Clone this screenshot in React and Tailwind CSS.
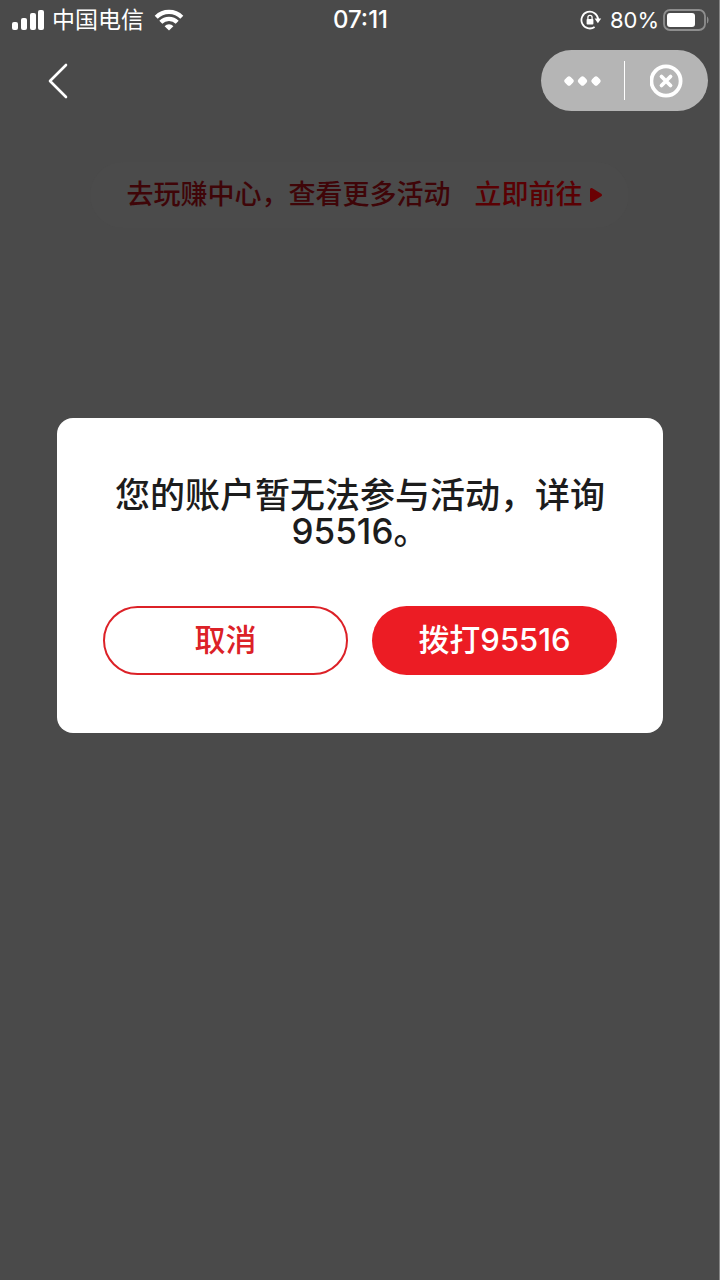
import React from 'react';

const SignalIcon = () => (
  <svg width="34" height="22" viewBox="0 0 34 22" fill="white" aria-hidden="true">
    <rect x="0" y="13" width="6" height="8" rx="2" />
    <rect x="9" y="9" width="6" height="12" rx="2" />
    <rect x="18" y="4" width="6" height="17" rx="2" />
    <rect x="26" y="1" width="6" height="20" rx="2" />
  </svg>
);

const WifiIcon = () => (
  <svg width="30" height="22" viewBox="0 0 30 22" aria-hidden="true">
    <g fill="none" stroke="white" strokeWidth="4.2">
      <path d="M2.2 8.2a18 18 0 0 1 25.6 0" />
      <path d="M6.8 13.2a11.6 11.6 0 0 1 16.4 0" />
    </g>
    <path d="M15 21.6l-4.4-4.4a6.2 6.2 0 0 1 8.8 0z" fill="white" />
  </svg>
);

const RotationLockIcon = () => (
  <svg width="22" height="20" viewBox="0 0 22 20" fill="none" aria-hidden="true">
    <path d="M14.6 17A8.4 8.4 0 1 1 18.2 9.2" stroke="white" strokeWidth="1.8" />
    <path d="M14.6 8.6h6.6l-3.3 4.6z" fill="white" />
    <rect x="6.6" y="9" width="6.8" height="5.6" rx="0.8" fill="white" />
    <path d="M7.9 9.4V7.4a2.1 2.1 0 0 1 4.2 0v2" stroke="white" strokeWidth="1.3" />
  </svg>
);

const BatteryIcon = () => (
  <svg width="46" height="22" viewBox="0 0 46 22" aria-hidden="true">
    <rect x="1" y="1" width="41" height="20" rx="6" fill="none" stroke="#8e8e8e" strokeWidth="1.8" />
    <rect x="4" y="4" width="28" height="14" rx="3" fill="white" />
    <path d="M44 7.5c2 1 2 6 0 7z" fill="#8e8e8e" />
  </svg>
);

const StatusBar = () => (
  <div className="grid grid-cols-[1fr_auto_1fr] items-center h-10 pl-3 pr-2.5 text-white">
    <div className="flex items-center">
      <SignalIcon />
      <span className="ml-1.5 mr-2.5 text-[23px] leading-8">中国电信</span>
      <WifiIcon />
    </div>
    <span className="text-[24px] leading-8 font-medium">07:11</span>
    <div className="flex items-center justify-end">
      <RotationLockIcon />
      <span className="ml-2 mr-1 text-[22px] leading-8">80%</span>
      <BatteryIcon />
    </div>
  </div>
);

const NavBar = () => (
  <div className="flex items-center justify-between mt-2.5 pl-12 pr-[11px]">
    <button type="button" aria-label="返回">
      <svg width="20" height="36" viewBox="0 0 20 36" fill="none" aria-hidden="true">
        <path d="M18 2L2 18l16 16" stroke="white" strokeWidth="2.6" strokeLinecap="round" strokeLinejoin="round" />
      </svg>
    </button>
    <div className="flex items-center w-[167px] h-[61px] rounded-full bg-[#b5b5b5]">
      <button type="button" aria-label="更多" className="flex-1 flex justify-center">
        <svg width="38" height="12" viewBox="0 0 38 12" fill="white" aria-hidden="true">
          <rect x="1" y="2" width="8" height="8" rx="2.4" transform="rotate(45 5 6)" />
          <rect x="14.5" y="2" width="8" height="8" rx="2.4" transform="rotate(45 18.5 6)" />
          <rect x="28" y="2" width="8" height="8" rx="2.4" transform="rotate(45 32 6)" />
        </svg>
      </button>
      <span className="w-px h-[39px] bg-white" />
      <button type="button" aria-label="关闭" className="flex-1 flex justify-center">
        <svg width="34" height="34" viewBox="0 0 34 34" fill="none" stroke="white" aria-hidden="true">
          <circle cx="16" cy="17" r="14.6" strokeWidth="3.8" />
          <path d="M11.5 12.5l9 9M20.5 12.5l-9 9" strokeWidth="3.8" strokeLinecap="round" />
        </svg>
      </button>
    </div>
  </div>
);

const ActivityBanner = () => (
  <div className="flex items-center justify-center h-[66px] mt-[51px] mx-[90px] pl-2.5 rounded-full bg-[#4b4b4b] text-[27px] leading-10 font-medium">
    <span className="text-[#3f0508]">去玩赚中心，查看更多活动</span>
    <a href="#" className="flex items-center gap-1.5 ml-6 text-[#5a0003]">
      立即前往
      <svg width="14" height="16" viewBox="0 0 14 16" aria-hidden="true">
        <path d="M2.5 2.5v11l9-5.5z" fill="#6b0003" stroke="#6b0003" strokeWidth="3" strokeLinejoin="round" />
      </svg>
    </a>
  </div>
);

const AccountDialog = () => (
  <div
    role="dialog"
    aria-labelledby="dialog-title"
    className="mt-[190px] ml-[57px] mr-14 px-[46px] pt-[59px] pb-[58px] rounded-2xl bg-white"
  >
    <h1 id="dialog-title" className="text-center text-[35px] leading-9 font-medium text-[#1c1c1c]">
      您的账户暂无法参与活动，详询95516。
    </h1>
    <div className="grid grid-cols-2 gap-6 mt-[57px]">
      <button
        type="button"
        className="h-[69px] rounded-full border-2 border-[#dc2127] text-[31px] font-medium text-[#dc2127]"
      >
        取消
      </button>
      <button type="button" className="h-[69px] rounded-full bg-[#ec1c24] text-[31px] font-medium text-white">
        拨打95516
      </button>
    </div>
  </div>
);

const App = () => {
  return (
    <div className="min-h-screen border-r border-[#858585] bg-[#4a4a4a] font-['Inter','Noto_Sans_CJK_SC',sans-serif]">
      <StatusBar />
      <NavBar />
      <ActivityBanner />
      <AccountDialog />
    </div>
  );
};

export default App;
